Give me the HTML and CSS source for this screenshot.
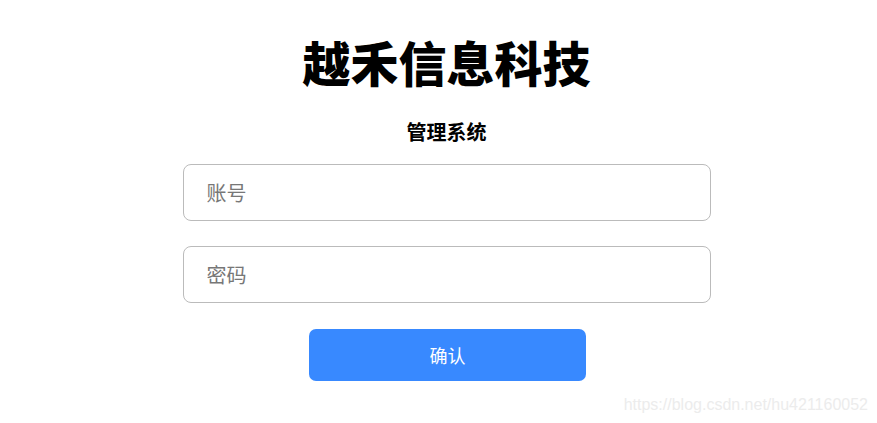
FILE: index.html
```html
<!DOCTYPE html>
<html lang="zh-CN">
<head>
    <meta charset="UTF-8">
    <meta name="viewport" content="width=device-width, initial-scale=1.0">
    <title>越禾信息科技 - 管理系统</title>
    <link rel="stylesheet" href="styles.css">
</head>
<body>
    <div class="login">
        <h1 class="title">越禾信息科技</h1>
        <h2 class="subtitle">管理系统</h2>

        <form class="login-form">
            <input class="field" type="text" placeholder="账号">
            <input class="field" type="password" placeholder="密码">
            <button class="submit" type="button">确认</button>
        </form>
    </div>

    <div class="watermark">https://blog.csdn.net/hu421160052</div>
</body>
</html>
```

FILE: styles.css
```css
body {
    font-family: "Noto Sans CJK SC", "Liberation Sans", sans-serif;
    background-color: #fff;
    margin: 0;
    padding: 0;
    height: 423px;
    overflow: hidden;
    position: relative;
}

.login {
    display: flex;
    flex-direction: column;
    align-items: center;
    padding-left: 16px;
    padding-top: 30px;
}

.title {
    font-size: 48px;
    font-weight: 900;
    line-height: 62px;
    margin: 0;
    color: #000;
}

.subtitle {
    font-size: 20px;
    font-weight: bold;
    line-height: 28px;
    margin: 26px 0 0;
    color: #000;
}

.login-form {
    display: flex;
    flex-direction: column;
    align-items: center;
    margin-top: 18px;
}

.field {
    box-sizing: border-box;
    width: 528px;
    height: 57px;
    padding: 0 23px;
    font-family: "Noto Sans CJK SC", sans-serif;
    font-size: 20px;
    border: 1px solid #bbb;
    border-radius: 8px;
    outline: none;
    margin-bottom: 25px;
}

.field::placeholder {
    color: #777;
}

.submit {
    width: 277px;
    height: 52px;
    margin-top: 1px;
    margin-left: 2px;
    background-color: #3889ff;
    color: #fff;
    font-family: "Noto Sans CJK SC", sans-serif;
    font-size: 18px;
    border: none;
    border-radius: 7px;
    cursor: pointer;
}

.watermark {
    position: absolute;
    right: 9px;
    bottom: 9px;
    font-family: "Liberation Sans", Arial, sans-serif;
    font-size: 16px;
    color: #ececec;
}
```
